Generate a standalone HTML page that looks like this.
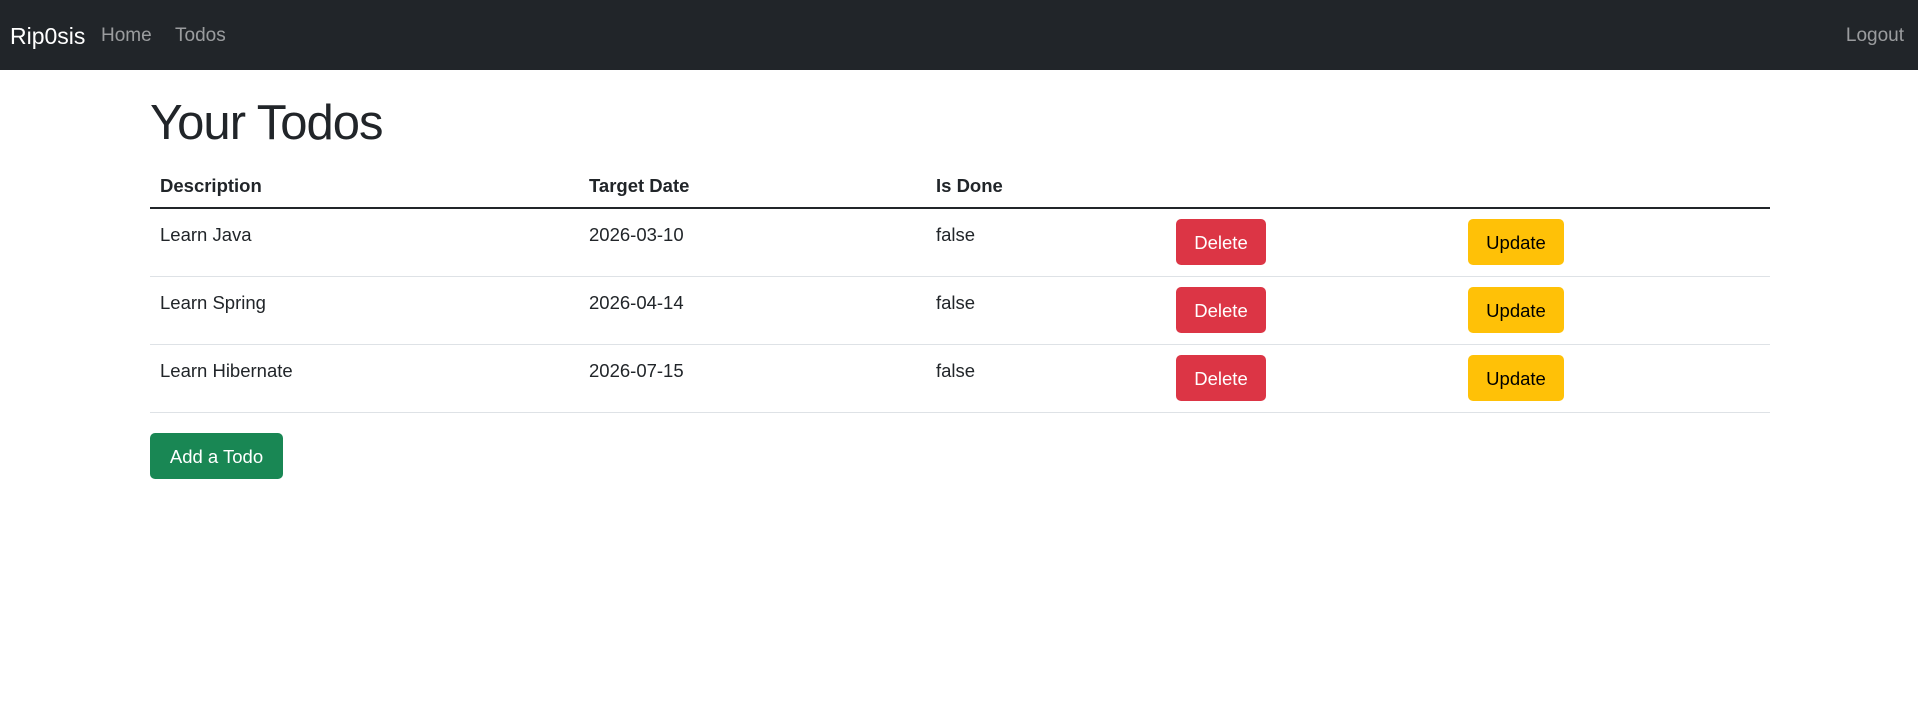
<!DOCTYPE html>
<html><head><meta charset="utf-8"><style>
body{margin:0;width:1918px;height:707px;background:#fff;font-family:"Liberation Sans",sans-serif;color:#212529;position:relative;overflow:hidden}
.nav{position:absolute;left:0;top:0;width:1918px;height:70px;background:#212529}
.a{position:absolute;white-space:nowrap}
.brand{left:10px;top:23px;font-size:23px;color:#fff}
.nl{font-size:19px;color:rgba(255,255,255,.55);top:25px}
h1{position:absolute;left:150px;top:95px;margin:0;font-size:49px;font-weight:500;letter-spacing:-1px}
.th{font-weight:bold;font-size:18.5px;top:175px}
.td{font-size:18.5px}
.line{position:absolute;left:150px;width:1620px;height:1px;background:#dee2e6}
.btn{position:absolute;height:46px;border-radius:5px;font-size:18.5px;line-height:48px;text-align:center}
.del{background:#dc3545;color:#fff;left:1176px;width:90px}
.upd{background:#ffc107;color:#000;left:1468px;width:96px}
</style></head><body>
<div class="nav">
<div class="a brand">Rip0sis</div>
<div class="a nl" style="left:101px">Home</div>
<div class="a nl" style="left:175px">Todos</div>
<div class="a nl" style="right:14px">Logout</div>
</div>
<h1>Your Todos</h1>
<div class="a th" style="left:160px">Description</div>
<div class="a th" style="left:589px">Target Date</div>
<div class="a th" style="left:936px">Is Done</div>
<div class="line" style="top:207px;height:2px;background:#212529"></div>

<div class="a td" style="left:160px;top:224px">Learn Java</div>
<div class="a td" style="left:589px;top:224px">2026-03-10</div>
<div class="a td" style="left:936px;top:224px">false</div>
<div class="btn del" style="top:219px">Delete</div>
<div class="btn upd" style="top:219px">Update</div>
<div class="line" style="top:276px"></div>

<div class="a td" style="left:160px;top:292px">Learn Spring</div>
<div class="a td" style="left:589px;top:292px">2026-04-14</div>
<div class="a td" style="left:936px;top:292px">false</div>
<div class="btn del" style="top:287px">Delete</div>
<div class="btn upd" style="top:287px">Update</div>
<div class="line" style="top:344px"></div>

<div class="a td" style="left:160px;top:360px">Learn Hibernate</div>
<div class="a td" style="left:589px;top:360px">2026-07-15</div>
<div class="a td" style="left:936px;top:360px">false</div>
<div class="btn del" style="top:355px">Delete</div>
<div class="btn upd" style="top:355px">Update</div>
<div class="line" style="top:412px"></div>

<div class="btn" style="left:150px;top:433px;width:133px;background:#198754;color:#fff">Add a Todo</div>
</body></html>
